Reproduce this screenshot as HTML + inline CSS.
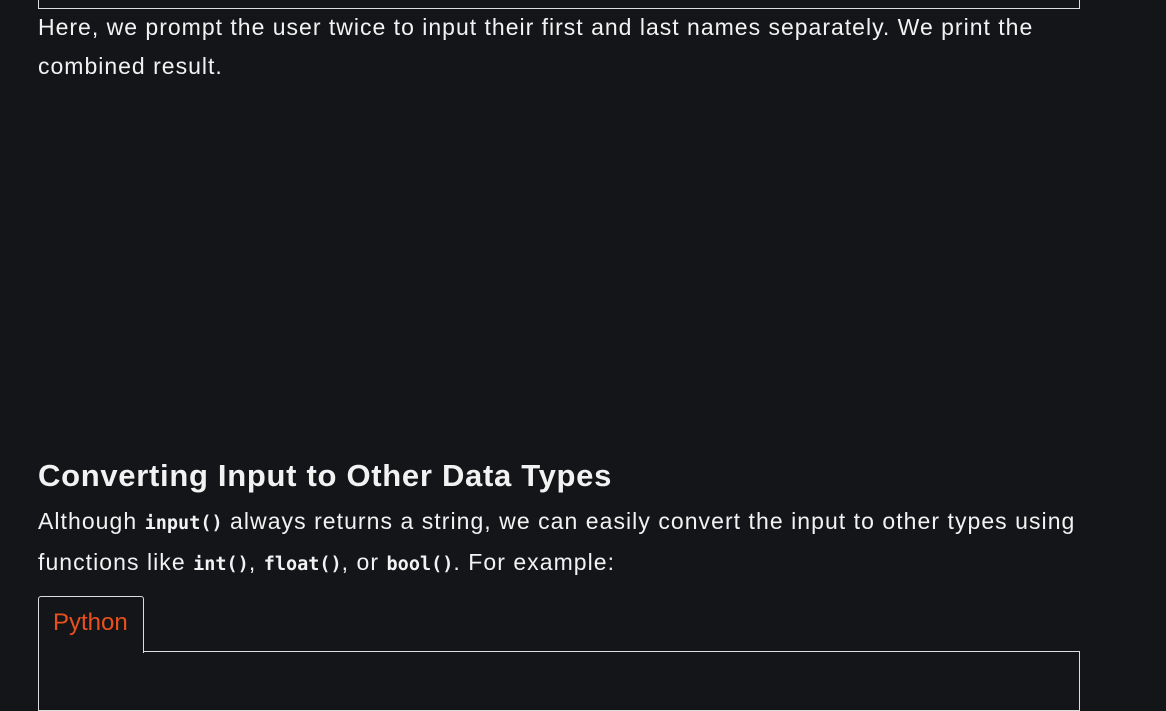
<!DOCTYPE html>
<html><head><style>
body{margin:0;background:#141518;width:1166px;height:676px;overflow:hidden;position:relative;font-family:"Liberation Sans",sans-serif;color:#f2f2f2}
.box{position:absolute;left:38px;width:1042px;border:1px solid #ddd;box-sizing:border-box}
p{position:absolute;left:38px;margin:0;font-size:23px;line-height:39px;width:1120px;letter-spacing:1px;white-space:nowrap}
code{font-family:"DejaVu Sans Mono","Liberation Mono",monospace;font-size:18.5px;font-weight:bold;letter-spacing:0}
h2{position:absolute;left:38px;top:456px;margin:0;font-size:31px;line-height:40px;font-weight:bold;letter-spacing:0.7px}
.tab{position:absolute;left:38px;top:596px;width:106px;height:57px;border:1px solid #ddd;border-bottom:none;border-radius:3px 3px 0 0;box-sizing:border-box;background:#141518;color:#e8501e;font-size:24px;padding:12px 0 0 14px;z-index:2}
</style></head><body>
<div class="box" style="top:-10px;height:19px"></div>
<p style="top:8px">Here, we prompt the user twice to input their first and last names separately. We print the<br>combined result.</p>
<h2>Converting Input to Other Data Types</h2>
<p style="top:502px;letter-spacing:1.05px">Although <code>input()</code> always returns a string, we can easily convert the input to other types using<br>functions like <code>int()</code>, <code>float()</code>, or <code>bool()</code>. For example:</p>
<div class="tab">Python</div>
<div class="box" style="top:651px;height:60px"></div>
</body></html>
